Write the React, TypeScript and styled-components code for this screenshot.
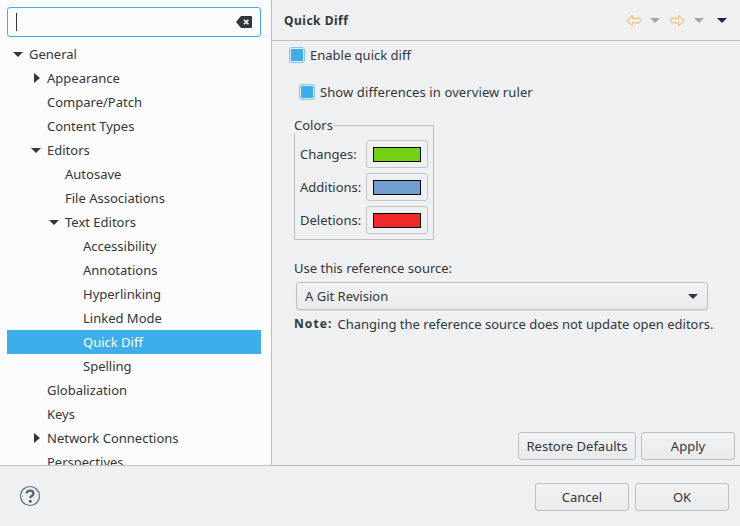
import React from "react";
import styled, { createGlobalStyle } from "styled-components";

const Global = createGlobalStyle`
  html, body { margin: 0; padding: 0; background: #eff0f1; }
  * { box-sizing: border-box; }
`;

const Window = styled.div`
  width: 740px; height: 526px; display: flex; flex-direction: column; overflow: hidden;
  background: #eff0f1; color: #31363b; font-family: "Noto Sans", sans-serif; font-size: 13px;
`;
const Main = styled.div`
  height: 466px; display: flex; border-bottom: 1px solid #bcbebf;
`;
const Sidebar = styled.aside`
  width: 272px; flex: none; background: #fcfcfc; border-right: 1px solid #bcbebf;
  padding: 7px 10px 0 7px; overflow: hidden;
`;
const Search = styled.div`
  height: 30px; border: 1px solid #3daee9; border-radius: 3px; background: #fcfcfc;
  display: flex; align-items: center; justify-content: space-between; padding: 0 8px 0 8px;
`;
const Caret = styled.span`
  width: 1px; height: 18px; background: #31363b;
`;
const Tree = styled.ul`
  list-style: none; margin: 5px 0 0; padding: 0;
`;
const Row = styled.li<{ $level: number; $selected?: boolean }>`
  height: 24px; display: flex; align-items: center; line-height: 24px; white-space: nowrap;
  padding-left: ${(p) => 4 + p.$level * 18}px;
  background: ${(p) => (p.$selected ? "#3daee9" : "transparent")};
  color: ${(p) => (p.$selected ? "#fcfcfc" : "#31363b")};
`;
const Twist = styled.span<{ $closed?: boolean }>`
  width: 18px; flex: none; display: flex; align-items: center; justify-content: flex-start;
  padding-left: ${(p) => (p.$closed ? 5 : 2)}px;
`;
const Content = styled.section`
  flex: 1; min-width: 0; display: flex; flex-direction: column;
`;
const Header = styled.header`
  height: 41px; flex: none; border-bottom: 1px solid #bcbebf; display: flex; align-items: center;
  justify-content: space-between; padding: 0 13px 0 12px;
`;
const Title = styled.h1`
  margin: 0; font-size: 12px; font-weight: 700; letter-spacing: 0.5px; color: #31363b;
`;
const Nav = styled.div`
  display: flex; align-items: center;
`;
const NavGap = styled.span<{ $width: number }>`
  width: ${(p) => p.$width}px; flex: none;
`;
const Form = styled.div`
  flex: 1; display: flex; flex-direction: column; padding: 0 5px 5px 22px; min-height: 0;
`;
const CheckRow = styled.label<{ $indent?: number; $top: number; $spacing?: number }>`
  display: flex; align-items: center; gap: 5px; height: 16px; line-height: 16px;
  margin-top: ${(p) => p.$top}px; margin-left: ${(p) => p.$indent ?? 0}px; white-space: nowrap;
  letter-spacing: ${(p) => p.$spacing ?? 0}px;
`;
const Check = styled.span`
  width: 16px; height: 16px; flex: none; border: 1px solid #7fc4ea; border-radius: 3px; background: #e3eff5;
  display: flex; align-items: center; justify-content: center;
  &::after { content: ""; width: 12px; height: 12px; border-radius: 1px; background: #3daee9; }
`;
const Group = styled.fieldset`
  position: relative; width: 140px; height: 115px; margin: 25px 0 0; padding: 14px 5px 0 5px;
  border: 1px solid #bcbebf; display: flex; flex-direction: column; gap: 5px;
`;
const Legend = styled.span`
  position: absolute; top: -9px; left: -1px; background: #eff0f1; padding-right: 1px; line-height: 16px;
`;
const ColorRow = styled.div`
  display: flex; align-items: center; justify-content: space-between; height: 28px;
`;
const ColorButton = styled.button`
  width: 62px; height: 28px; padding: 0; border: 1px solid #c2c4c6; border-radius: 3px; background: #eff0f1;
  display: flex; align-items: center; justify-content: center;
`;
const Swatch = styled.span<{ $color: string }>`
  width: 48px; height: 15px; border: 1px solid #000; background: ${(p) => p.$color};
`;
const FieldLabel = styled.div`
  margin-top: 20px; line-height: 16px;
`;
const Select = styled.div`
  width: 412px; height: 28px; margin: 6px 0 0 2px; padding: 0 9px 0 8px; display: flex; align-items: center;
  justify-content: space-between; border: 1px solid #bcbebf; border-radius: 3px;
  background: linear-gradient(#f1f2f3, #e9eaeb); box-shadow: 0 1px 1px rgba(0,0,0,.08);
`;
const Note = styled.p`
  margin: 6px 0 0; line-height: 16px; white-space: nowrap; display: flex; gap: 5px;
  & strong { font-weight: 700; letter-spacing: 1.1px; font-size: 12px; }
`;
const Actions = styled.div<{ $gap: number }>`
  display: flex; justify-content: flex-end; gap: ${(p) => p.$gap}px;
`;
const PageActions = styled(Actions)`
  margin-top: auto;
`;
const Button = styled.button<{ $width: number }>`
  width: ${(p) => p.$width}px; height: 28px; padding: 0; border: 1px solid #bcbebf; border-radius: 3px;
  background: linear-gradient(#f1f2f3, #e9eaeb); color: #31363b;
  font-family: "Noto Sans", sans-serif; font-size: 13px;
`;
const Footer = styled.footer`
  flex: 1; display: flex; align-items: center; justify-content: space-between; padding: 0 11px 0 19px;
`;
const FooterActions = styled(Actions)`
  margin-top: 1px;
`;

const Down = ({ color = "#31363b" }: { color?: string }) => (
  <svg width="10" height="5" viewBox="0 0 10 5"><path d="M0 0h10L5 5z" fill={color} /></svg>
);
const Right = () => (
  <svg width="6" height="10" viewBox="0 0 6 10"><path d="M0 0v10l6-5z" fill="#31363b" /></svg>
);
const NavArrow = ({ flip }: { flip?: boolean }) => (
  <svg width="15" height="13" viewBox="0 0 15 13" style={{ transform: flip ? "scaleX(-1)" : undefined }}>
    <path d="M0.8 6.5 6.3 1.2v3h7c.6 0 .9.3.9.9v2.8c0 .6-.3.9-.9.9h-7v3z" fill="#fbf1cf" stroke="#dcb97a" strokeWidth="1" strokeLinejoin="round" />
  </svg>
);
const ClearIcon = () => (
  <svg width="16" height="12" viewBox="0 0 16 12">
    <path d="M5 0h10a1 1 0 0 1 1 1v10a1 1 0 0 1-1 1H5L0 6z" fill="#31363b" />
    <path d="M8 3.7l4.4 4.6M12.4 3.7 8 8.3" stroke="#fcfcfc" strokeWidth="1.6" />
  </svg>
);
const HelpIcon = () => (
  <svg width="22" height="22" viewBox="0 0 22 22">
    <circle cx="11" cy="11" r="9.5" fill="#eff0f1" stroke="#5a6a8a" strokeWidth="1.2" />
    <path d="M7.6 8.4C7.8 6.5 9.2 5.6 11 5.6c2 0 3.4 1.1 3.4 2.8 0 1.4-.8 2-1.8 2.7-.9.6-1.2 1-1.2 2" fill="none" stroke="#5a6477" strokeWidth="2.4" />
    <circle cx="11.3" cy="16.2" r="1.5" fill="#5a6477" />
  </svg>
);

type Item = { label: string; level: number; open?: boolean; closed?: boolean; selected?: boolean };
const items: Item[] = [
  { label: "General", level: 0, open: true },
  { label: "Appearance", level: 1, closed: true },
  { label: "Compare/Patch", level: 1 },
  { label: "Content Types", level: 1 },
  { label: "Editors", level: 1, open: true },
  { label: "Autosave", level: 2 },
  { label: "File Associations", level: 2 },
  { label: "Text Editors", level: 2, open: true },
  { label: "Accessibility", level: 3 },
  { label: "Annotations", level: 3 },
  { label: "Hyperlinking", level: 3 },
  { label: "Linked Mode", level: 3 },
  { label: "Quick Diff", level: 3, selected: true },
  { label: "Spelling", level: 3 },
  { label: "Globalization", level: 1 },
  { label: "Keys", level: 1 },
  { label: "Network Connections", level: 1, closed: true },
  { label: "Perspectives", level: 1 },
];
const colors = [
  { label: "Changes:", color: "#73d216" },
  { label: "Additions:", color: "#729fcf" },
  { label: "Deletions:", color: "#ef2929" },
];

export default function App() {
  return (
    <Window>
      <Global />
      <Main>
        <Sidebar>
          <Search><Caret /><ClearIcon /></Search>
          <Tree>
            {items.map((it) => (
              <Row key={it.label} $level={it.level} $selected={it.selected}>
                <Twist $closed={it.closed}>{it.open ? <Down /> : it.closed ? <Right /> : null}</Twist>
                {it.label}
              </Row>
            ))}
          </Tree>
        </Sidebar>
        <Content>
          <Header>
            <Title>Quick Diff</Title>
            <Nav>
              <NavArrow />
              <NavGap $width={9} />
              <Down color="#a4a6a8" />
              <NavGap $width={10} />
              <NavArrow flip />
              <NavGap $width={9} />
              <Down color="#a4a6a8" />
              <NavGap $width={13} />
              <Down color="#231f48" />
            </Nav>
          </Header>
          <Form>
            <CheckRow $top={6} $indent={-5}><Check />Enable quick diff</CheckRow>
            <CheckRow $top={21} $indent={5} $spacing={0.1}><Check />Show differences in overview ruler</CheckRow>
            <Group>
              <Legend>Colors</Legend>
              {colors.map((c) => (
                <ColorRow key={c.label}>
                  {c.label}
                  <ColorButton><Swatch $color={c.color} /></ColorButton>
                </ColorRow>
              ))}
            </Group>
            <FieldLabel>Use this reference source:</FieldLabel>
            <Select>A Git Revision<Down /></Select>
            <Note><strong>Note:</strong> Changing the reference source does not update open editors.</Note>
            <PageActions $gap={5}>
              <Button $width={118}>Restore Defaults</Button>
              <Button $width={94}>Apply</Button>
            </PageActions>
          </Form>
        </Content>
      </Main>
      <Footer>
        <HelpIcon />
        <FooterActions $gap={6}>
          <Button $width={94}>Cancel</Button>
          <Button $width={94}>OK</Button>
        </FooterActions>
      </Footer>
    </Window>
  );
}
